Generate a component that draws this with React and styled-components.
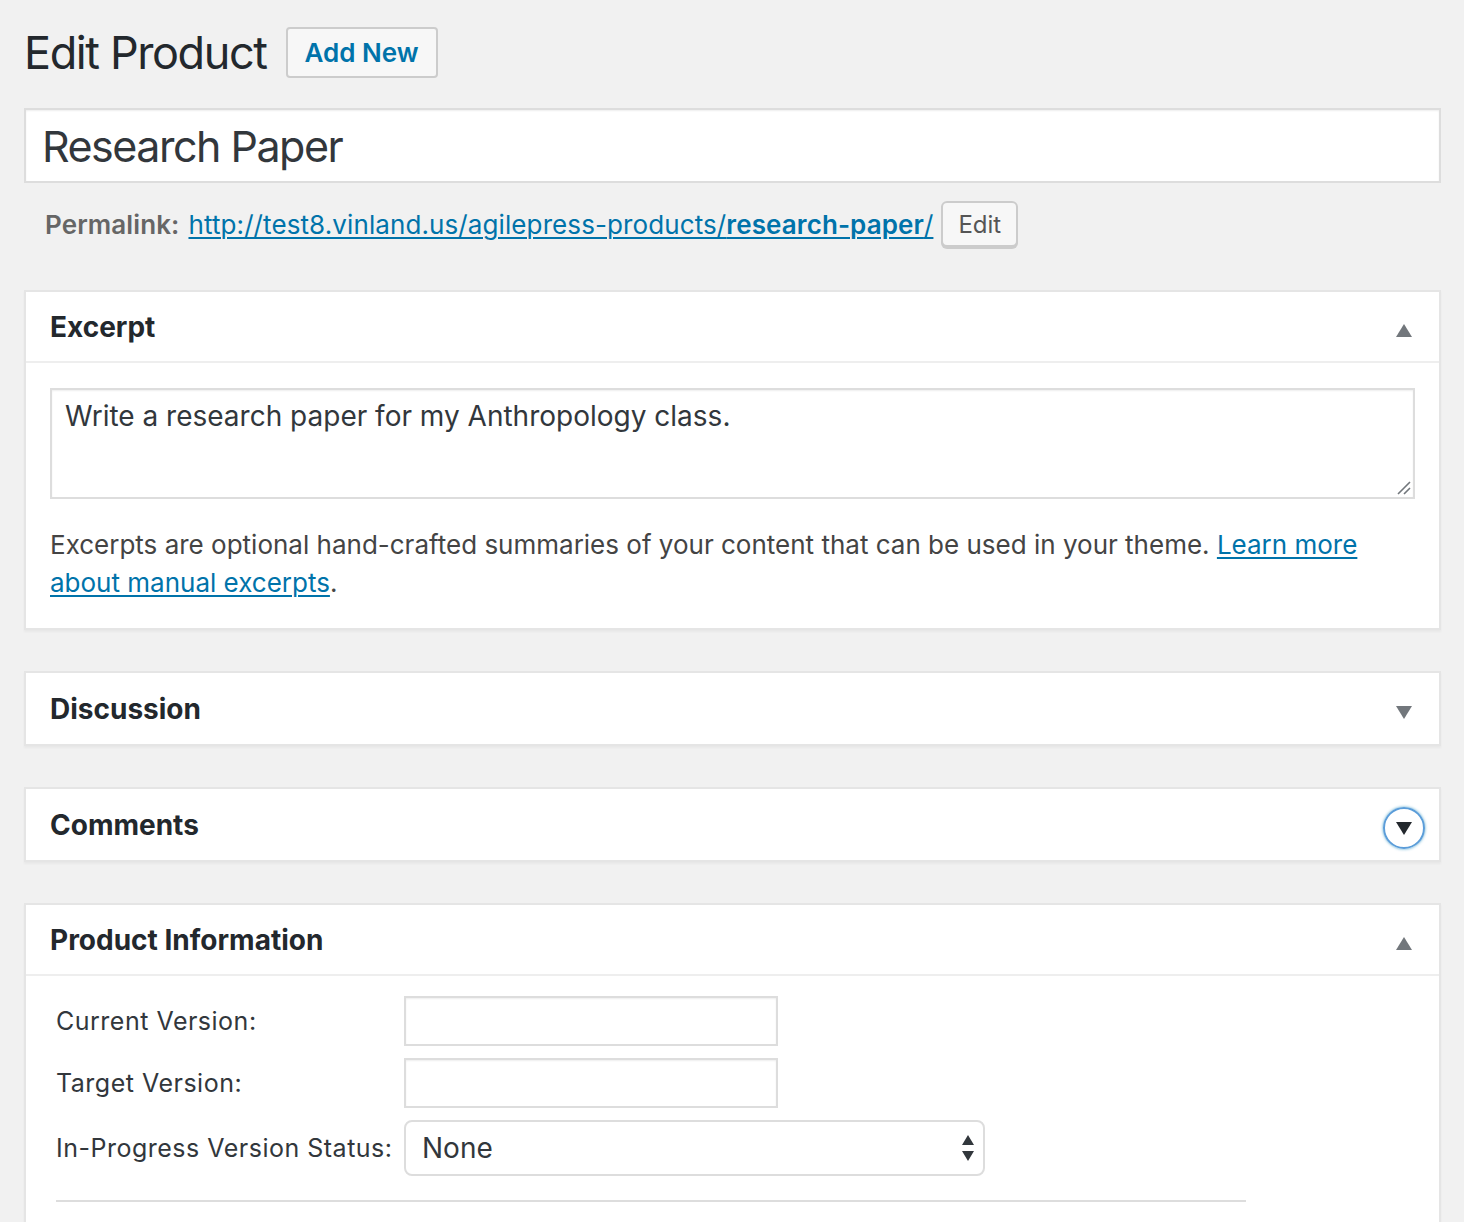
import React from "react";
import styled, { createGlobalStyle } from "styled-components";

const GlobalStyle = createGlobalStyle`
  html, body {
    margin: 0;
    padding: 0;
    background: #f1f1f1;
  }
  body {
    font-family: Inter, "Noto Sans", "Liberation Sans", sans-serif;
    color: #23282d;
  }
`;

const Wrap = styled.div`
  padding: 16px 23px 0 24px;
`;

const HeadingRow = styled.div`
  display: flex;
  align-items: center;
  gap: 19px;
  height: 72px;
`;

const Heading = styled.h1`
  margin: 0;
  font-size: 45px;
  font-weight: 400;
  letter-spacing: -1.4px;
  color: #23282d;
`;

const PageButton = styled.a`
  display: inline-flex;
  align-items: center;
  height: 47px;
  padding: 0 17px;
  border: 2px solid #ccc;
  border-radius: 4px;
  background: #f7f7f7;
  color: #0073aa;
  font-size: 26px;
  font-weight: 600;
  text-decoration: none;
`;

const TitleInput = styled.div`
  margin-top: 20px;
  height: 71px;
  border: 2px solid #ddd;
  background: #fff;
  display: flex;
  align-items: center;
  padding-left: 16px;
  font-size: 43px;
  letter-spacing: -1.5px;
  color: #32373c;
  box-shadow: inset 0 1px 2px rgba(0, 0, 0, 0.07);
`;

const PermalinkRow = styled.div`
  display: flex;
  align-items: center;
  margin-top: 17px;
  padding-left: 21px;
  height: 48px;
  font-size: 26px;
  letter-spacing: 0.1px;
  color: #666;
`;

const PermalinkLabel = styled.strong`
  font-weight: 600;
  margin-right: 9px;
`;

const Link = styled.a`
  color: #0073aa;
  text-decoration: underline;
  text-underline-offset: 3px;
  text-decoration-thickness: 2px;
  b {
    font-weight: 600;
  }
`;

const SmallButton = styled.span`
  display: inline-flex;
  align-items: center;
  height: 46px;
  margin-left: 8px;
  padding: 0 15px;
  border: 2px solid #ccc;
  border-radius: 6px;
  background: #f7f7f7;
  box-shadow: 0 2px 0 #ccc;
  color: #555;
  font-size: 24px;
  letter-spacing: 0;
  box-sizing: border-box;
`;

const Postbox = styled.div`
  margin-top: ${(p) => p.$top || 41}px;
  background: #fff;
  border: 2px solid #e5e5e5;
  box-shadow: 0 2px 2px rgba(0, 0, 0, 0.04);
`;

const BoxHeader = styled.div`
  display: flex;
  align-items: center;
  justify-content: space-between;
  height: 71px;
  padding: 1px 14px 0 24px;
  box-sizing: border-box;
  border-bottom: ${(p) => (p.$open ? "2px solid #eee" : "none")};
  h2 {
    margin: 0;
    font-size: 28px;
    font-weight: 700;
    color: #23282d;
  }
`;

const Toggle = styled.span`
  display: flex;
  align-items: center;
  justify-content: center;
  width: 42px;
  height: 42px;
  margin-top: 6px;
  border-radius: 50%;
  box-sizing: border-box;
  padding-top: 1px;
  color: ${(p) => (p.$focus ? "#23282d" : "#72777c")};
  border: 2px solid ${(p) => (p.$focus ? "#5b9dd9" : "transparent")};
  box-shadow: ${(p) => (p.$focus ? "0 0 3px rgba(30,140,190,.8)" : "none")};
`;

const BoxBody = styled.div`
  padding: 25px 24px 26px 24px;
`;

const Textarea = styled.div`
  position: relative;
  border: 2px solid #ddd;
  box-shadow: inset 0 1px 2px rgba(0, 0, 0, 0.07);
  padding: 9px 13px;
  height: 89px;
  font-size: 28px;
  color: #32373c;
`;

const Grip = styled.svg`
  position: absolute;
  right: 2px;
  bottom: 2px;
`;

const Description = styled.p`
  margin: 27px 0 0;
  font-size: 26px;
  line-height: 38px;
  color: #444;
`;

const FieldTable = styled.div`
  display: grid;
  grid-template-columns: 348px 1fr;
  row-gap: 12px;
  padding: 20px 0 0 30px;
  align-items: center;
`;

const Label = styled.label`
  font-size: 25px;
  color: #32373c;
  letter-spacing: 0.5px;
`;

const TextField = styled.div`
  width: 374px;
  height: 50px;
  border: 2px solid #ddd;
  box-sizing: border-box;
  box-shadow: inset 0 1px 2px rgba(0, 0, 0, 0.07);
  background: #fff;
`;

const Select = styled.div`
  display: flex;
  align-items: center;
  justify-content: space-between;
  width: 581px;
  height: 56px;
  box-sizing: border-box;
  border: 2px solid #ddd;
  border-radius: 8px;
  padding: 0 8px 0 16px;
  font-size: 28px;
  color: #32373c;
  background: #fff;
`;

const Rule = styled.div`
  margin: 24px 0 0 30px;
  width: 1190px;
  border-top: 2px solid #ddd;
  height: 30px;
`;

const Arrow = ({ up }) => (
  <svg width="16" height="13" viewBox="0 0 16 13">
    <path d={up ? "M8 0 L16 13 L0 13 Z" : "M0 0 L16 0 L8 13 Z"} fill="currentColor" />
  </svg>
);

const Box = ({ title, open, focus, top, children }) => (
  <Postbox $top={top}>
    <BoxHeader $open={open}>
      <h2>{title}</h2>
      <Toggle $focus={focus}>
        <Arrow up={open} />
      </Toggle>
    </BoxHeader>
    {open && children}
  </Postbox>
);

export default function App() {
  return (
    <>
      <GlobalStyle />
      <Wrap>
        <HeadingRow>
          <Heading>Edit Product</Heading>
          <PageButton>Add New</PageButton>
        </HeadingRow>
        <TitleInput>Research Paper</TitleInput>
        <PermalinkRow>
          <PermalinkLabel>Permalink:</PermalinkLabel>
          <Link>
            http://test8.vinland.us/agilepress-products/<b>research-paper</b>/
          </Link>
          <SmallButton>Edit</SmallButton>
        </PermalinkRow>

        <Box title="Excerpt" open top={42}>
          <BoxBody>
            <Textarea>
              Write a research paper for my Anthropology class.
              <Grip width="16" height="16" viewBox="0 0 16 16">
                <path d="M3 15 L15 3 M9 15 L15 9" stroke="#72777c" strokeWidth="1.6" />
              </Grip>
            </Textarea>
            <Description>
              Excerpts are optional hand-crafted summaries of your content that can be used in
              your theme. <Link>Learn more about manual excerpts</Link>.
            </Description>
          </BoxBody>
        </Box>

        <Box title="Discussion" />
        <Box title="Comments" focus />

        <Box title="Product Information" open>
          <FieldTable>
            <Label>Current Version:</Label>
            <TextField />
            <Label>Target Version:</Label>
            <TextField />
            <Label>In-Progress Version Status:</Label>
            <Select>
              <span>None</span>
              <svg width="14" height="28" viewBox="0 0 14 28">
                <path d="M7 1 L13 11 L1 11 Z M1 17 L13 17 L7 27 Z" fill="#32373c" />
              </svg>
            </Select>
          </FieldTable>
          <Rule />
        </Box>
      </Wrap>
    </>
  );
}
